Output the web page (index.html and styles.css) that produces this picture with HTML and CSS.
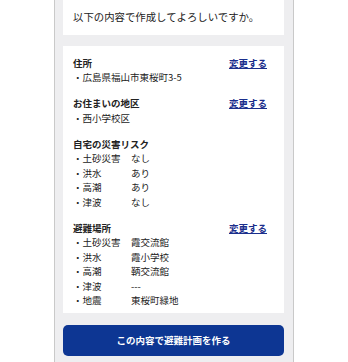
FILE: index.html
```html
<!DOCTYPE html>
<html lang="ja">
<head>
  <meta charset="UTF-8" />
  <meta name="viewport" content="width=device-width, initial-scale=1.0"/>
  <title>避難計画の確認</title>
  <link rel="stylesheet" href="styles.css">
</head>
<body>

<div class="screen">
  <div class="card intro">
    <p>以下の内容で作成してよろしいですか。</p>
  </div>

  <div class="card summary">
    <div class="group">
      <div class="group-head">
        <span class="label">住所</span>
        <a href="#" class="change">変更する</a>
      </div>
      <div class="item">・広島県福山市東桜町3-5</div>
    </div>

    <div class="group">
      <div class="group-head">
        <span class="label">お住まいの地区</span>
        <a href="#" class="change">変更する</a>
      </div>
      <div class="item">・西小学校区</div>
    </div>

    <div class="group">
      <div class="group-head">
        <span class="label">自宅の災害リスク</span>
      </div>
      <div class="pairs">
        <span>・土砂災害</span><span>なし</span>
        <span>・洪水</span><span>あり</span>
        <span>・高潮</span><span>あり</span>
        <span>・津波</span><span>なし</span>
      </div>
    </div>

    <div class="group">
      <div class="group-head">
        <span class="label">避難場所</span>
        <a href="#" class="change">変更する</a>
      </div>
      <div class="pairs">
        <span>・土砂災害</span><span>霞交流館</span>
        <span>・洪水</span><span>霞小学校</span>
        <span>・高潮</span><span>鞆交流館</span>
        <span>・津波</span><span>---</span>
        <span>・地震</span><span>東桜町緑地</span>
      </div>
    </div>
  </div>

  <button class="submit">この内容で避難計画を作る</button>
</div>

</body>
</html>
```

FILE: styles.css
```css
html, body {
  margin: 0;
  padding: 0;
  background: #fff;
  font-family: "Noto Sans CJK JP", "Noto Sans", sans-serif;
  font-size: 9.5px;
  line-height: 14.5px;
  color: #222;
}

.screen {
  width: 240px;
  margin-left: 54px;
  padding: 0 9px 6px 8px;
  box-sizing: border-box;
  background: #eeeef0;
  border: 1px solid #c9c9c9;
  border-top: none;
  display: flex;
  flex-direction: column;
}

.card {
  background: #fff;
}

.intro {
  padding: 10px;
}

.intro p {
  margin: 0;
  font-size: 10.4px;
}

.summary {
  margin-top: 11px;
  padding: 10px 17px 5px 10px;
}

.group + .group {
  margin-top: 11.5px;
}

.group-head {
  display: flex;
  justify-content: space-between;
}

.label {
  font-weight: bold;
}

.change {
  color: #1a2e8c;
  font-weight: bold;
  text-decoration: underline;
}

.pairs {
  display: grid;
  grid-template-columns: 58px 1fr;
}

.submit {
  margin-top: 12px;
  height: 31px;
  border: none;
  border-radius: 5px;
  background: #0d3693;
  color: #fff;
  font-family: inherit;
  font-size: 9.5px;
  font-weight: bold;
  cursor: pointer;
}
```
